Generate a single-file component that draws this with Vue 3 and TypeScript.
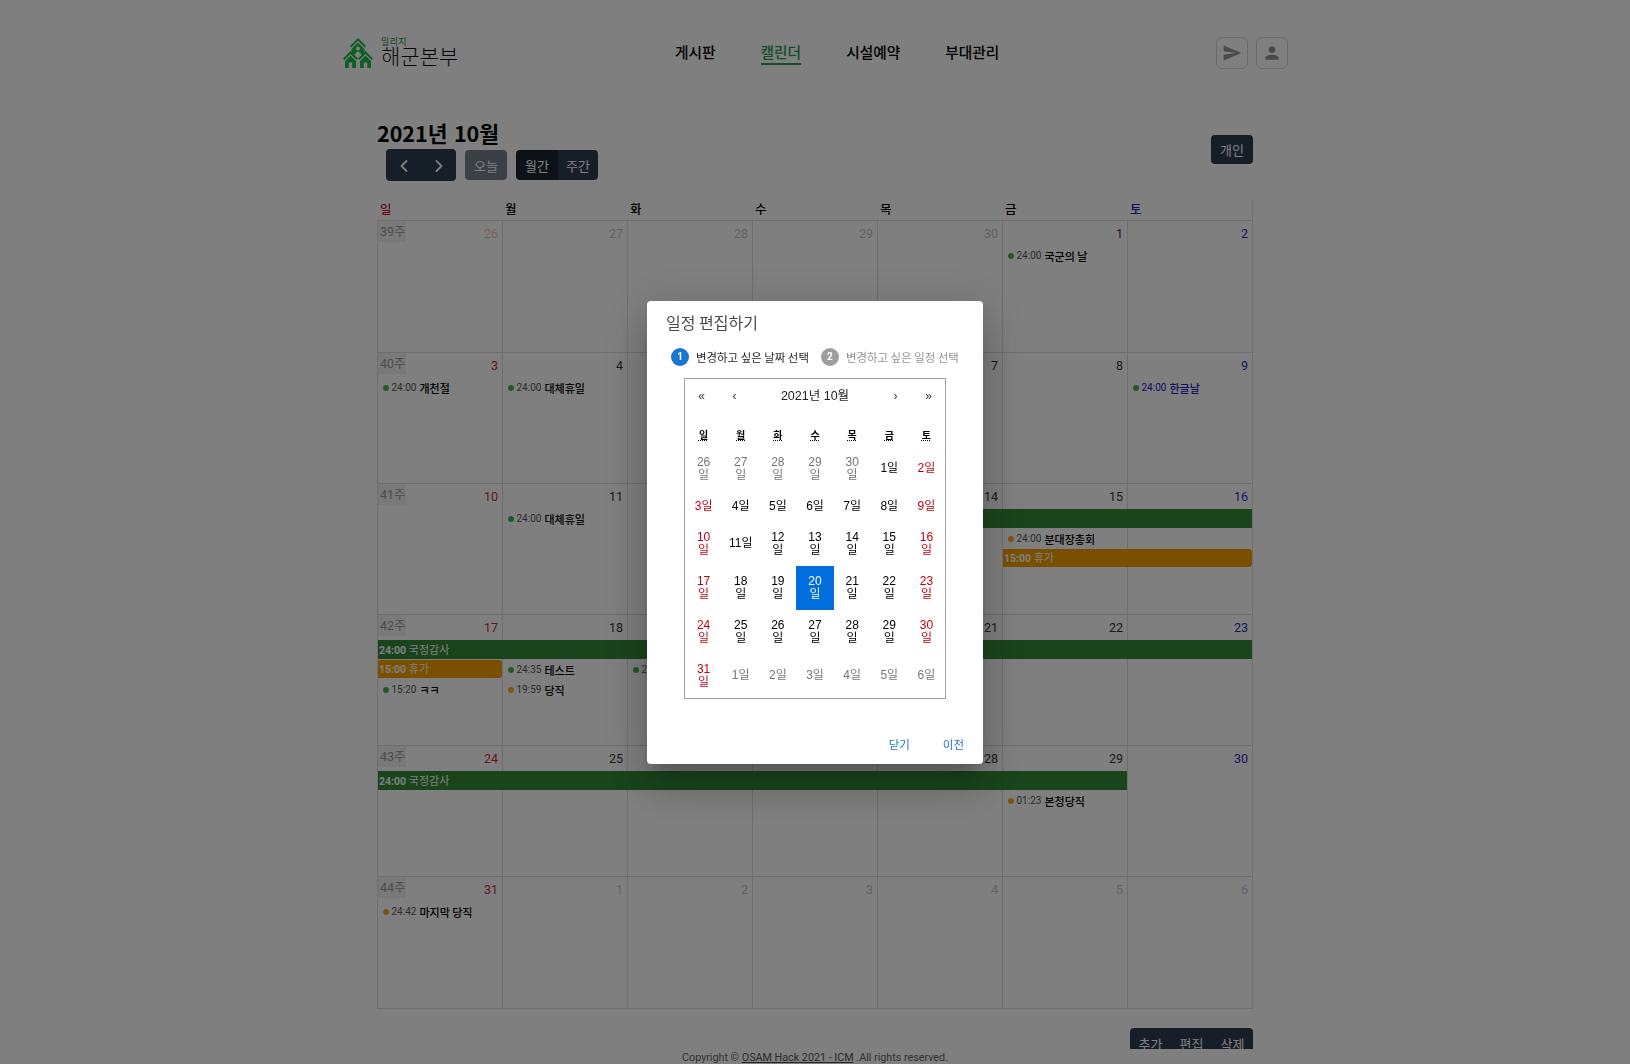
<template>
  <div class="page">
    <header class="topbar">
      <div class="brand">
        <svg class="brand-mark" viewBox="0 0 30 30" width="30" height="30">
          <path d="M15 0 23 8 21.6 9.4 15 2.8 8.4 9.4 7 8z" />
          <path d="M15 4.4 21.5 10.9V17H19L15 13 11 17H8.5V10.9z" />
          <circle cx="15" cy="10.5" r="2" fill="#fff" />
          <path d="M7.5 13 15 20.500 13.6 22 7.500 15.900 1.400 22 0 20.500z" />
          <path d="M22.500 13 30 20.500 28.600 22 22.500 15.900 16.400 22 15 20.500z" />
          <path d="M7.500 17.500 13 23V30H2V23zM22.500 17.500 28 23V30H17V23z" />
          <rect x="5.800" y="24.500" width="3.400" height="5.500" fill="#fff" />
          <rect x="20.800" y="24.500" width="3.400" height="5.500" fill="#fff" />
        </svg>
        <div class="brand-text">
          <span class="brand-sub">밀리지</span>
          <span class="brand-name">해군본부</span>
        </div>
      </div>
      <nav class="menu">
        <a v-for="item in menu" :key="item" class="menu-item" :class="{ active: item === '캘린더' }">{{ item }}</a>
      </nav>
      <div class="top-actions">
        <button class="icon-btn">
          <svg viewBox="0 0 24 24" width="20" height="20"><path d="M2.010 21 23 12 2.010 3 2 10l15 2-15 2z" /></svg>
        </button>
        <button class="icon-btn">
          <svg viewBox="0 0 24 24" width="20" height="20">
            <path d="M12 12c2.210 0 4-1.790 4-4s-1.790-4-4-4-4 1.790-4 4 1.790 4 4 4zm0 2c-2.670 0-8 1.340-8 4v2h16v-2c0-2.660-5.330-4-8-4z" />
          </svg>
        </button>
      </div>
    </header>

    <main class="content">
      <div class="toolbar">
        <div>
          <h1 class="month-title">2021년 10월</h1>
          <div class="controls">
            <div class="btn-group arrows">
              <button class="btn arrow">
                <svg viewBox="0 0 12 16" width="12" height="16"><path d="M8.500 3 3.500 8l5 5" /></svg>
              </button>
              <button class="btn arrow">
                <svg viewBox="0 0 12 16" width="12" height="16"><path d="M3.500 3l5 5-5 5" /></svg>
              </button>
            </div>
            <button class="btn today">오늘</button>
            <div class="btn-group">
              <button class="btn toggled">월간</button>
              <button class="btn">주간</button>
            </div>
          </div>
        </div>
        <button class="btn personal">개인</button>
      </div>

      <div class="dow-row">
        <div v-for="(d, i) in dows" :key="d" class="dow" :class="{ sun: i === 0, sat: i === 6 }">{{ d }}</div>
      </div>

      <div class="weeks">
        <div v-for="week in weeks" :key="week.label" class="week">
          <div
            v-for="(cell, i) in week.cells"
            :key="i"
            class="cell"
            :style="{ gridColumn: i + 1 }"
          >
            <span v-if="i === 0" class="week-no">{{ week.label }}</span>
            <span class="day-no" :class="{ sun: i === 0, sat: i === 6, out: cell.out }">{{ cell.n }}</span>
          </div>
          <template v-for="ev in week.events" :key="ev.title + ev.col + ev.slot">
            <div
              v-if="ev.span"
              class="bar"
              :class="ev.tone"
              :style="{ gridColumn: `${ev.col} / span ${ev.span}`, gridRow: ev.slot + 1 }"
            >
              <b>{{ ev.time }}</b> {{ ev.title }}
            </div>
            <div
              v-else
              class="dot-event"
              :class="{ holiday: ev.holiday }"
              :style="{ gridColumn: ev.col, gridRow: ev.slot + 1 }"
            >
              <i class="dot" :class="ev.tone"></i>
              <span class="dot-time">{{ ev.time }}</span>
              <b>{{ ev.title }}</b>
            </div>
          </template>
        </div>
      </div>

      <div class="bottom-actions">
        <div class="btn-group">
          <button class="btn">추가</button>
          <button class="btn">편집</button>
          <button class="btn">삭제</button>
        </div>
      </div>
    </main>

    <footer class="footer">
      Copyright © <a>OSAM Hack 2021 - ICM</a> .All rights reserved.
    </footer>

    <div class="overlay">
      <div class="dialog">
        <div class="dialog-title">일정 편집하기</div>
        <div class="stepper">
          <span class="step-num on">1</span>
          <span class="step-text on">변경하고 싶은 날짜 선택</span>
          <span class="step-num">2</span>
          <span class="step-text">변경하고 싶은 일정 선택</span>
        </div>
        <div class="picker">
          <div class="picker-nav">
            <button>«</button>
            <button>‹</button>
            <span class="picker-label">2021년 10월</span>
            <button>›</button>
            <button>»</button>
          </div>
          <div class="picker-dows">
            <abbr v-for="d in dows" :key="d" title="">{{ d }}</abbr>
          </div>
          <div class="picker-days">
            <button
              v-for="t in tiles"
              :key="t.key"
              class="tile"
              :class="{ weekend: t.weekend, out: t.out, picked: t.picked }"
            >{{ t.n }}일</button>
          </div>
        </div>
        <div class="dialog-actions">
          <button>닫기</button>
          <button>이전</button>
        </div>
      </div>
    </div>
  </div>
</template>

<script setup lang="ts">
interface CalEvent {
  col: number;
  slot: number;
  span?: number;
  time: string;
  title: string;
  tone: string;
  holiday?: boolean;
}

const menu = ["게시판", "캘린더", "시설예약", "부대관리"];
const dows = ["일", "월", "화", "수", "목", "금", "토"];

// 9월 26일 ~ 11월 6일
const allDays: { n: number; out: boolean }[] = [];
for (let n = 26; n <= 30; n++) allDays.push({ n, out: true });
for (let n = 1; n <= 31; n++) allDays.push({ n, out: false });
for (let n = 1; n <= 6; n++) allDays.push({ n, out: true });

const eventsByWeek: CalEvent[][] = [
  [{ col: 6, slot: 1, time: "24:00", title: "국군의 날", tone: "green" }],
  [
    { col: 1, slot: 1, time: "24:00", title: "개천절", tone: "green" },
    { col: 2, slot: 1, time: "24:00", title: "대체휴일", tone: "green" },
    { col: 7, slot: 1, time: "24:00", title: "한글날", tone: "green", holiday: true },
  ],
  [
    { col: 2, slot: 1, time: "24:00", title: "대체휴일", tone: "green" },
    { col: 4, slot: 1, span: 4, time: "", title: "", tone: "green" },
    { col: 6, slot: 2, time: "24:00", title: "분대장총회", tone: "orange" },
    { col: 6, slot: 3, span: 2, time: "15:00", title: "휴가", tone: "orange" },
  ],
  [
    { col: 1, slot: 1, span: 7, time: "24:00", title: "국정감사", tone: "green" },
    { col: 1, slot: 2, span: 1, time: "15:00", title: "휴가", tone: "orange" },
    { col: 1, slot: 3, time: "15:20", title: "ㅋㅋ", tone: "green" },
    { col: 2, slot: 2, time: "24:35", title: "테스트", tone: "green" },
    { col: 2, slot: 3, time: "19:59", title: "당직", tone: "orange" },
    { col: 3, slot: 2, time: "24:35", title: "테스트", tone: "green" },
  ],
  [
    { col: 1, slot: 1, span: 6, time: "24:00", title: "국정감사", tone: "green" },
    { col: 6, slot: 2, time: "01:23", title: "본청당직", tone: "orange" },
  ],
  [{ col: 1, slot: 1, time: "24:42", title: "마지막 당직", tone: "orange" }],
];

const weeks = eventsByWeek.map((events, i) => ({
  label: `${39 + i}주`,
  cells: allDays.slice(i * 7, i * 7 + 7),
  events,
}));

const tiles = allDays.map((d, i) => ({
  key: i,
  n: d.n,
  out: d.out,
  weekend: i % 7 === 0 || i % 7 === 6,
  picked: !d.out && d.n === 20,
}));
</script>

<style>
html,
body {
  overflow: hidden;
  background: #fff;
}
</style>

<style scoped>
.page {
  height: 100vh;
  overflow: hidden;
  font-family: Roboto, "Noto Sans CJK KR", sans-serif;
  color: #000;
}

button {
  font: inherit;
  border: none;
  background: none;
  padding: 0;
  color: inherit;
}

.topbar {
  width: 946px;
  margin: 0 auto;
  padding-top: 37px;
  height: 32px;
  display: flex;
  justify-content: space-between;
  align-items: center;
}

.brand {
  display: flex;
  align-items: center;
  gap: 8px;
  padding-left: 1px;
}

.brand-mark {
  fill: #1cc044;
}

.brand-text {
  position: relative;
  font-family: "Noto Sans CJK KR", sans-serif;
}

.brand-name {
  display: block;
  font-size: 21px;
  font-weight: 300;
  line-height: 28px;
  margin-top: 4px;
  color: #111;
}

.brand-sub {
  position: absolute;
  left: 0;
  top: -1px;
  font-size: 9px;
  line-height: 12px;
  letter-spacing: 0.4px;
  color: #1f8a3c;
}

.menu {
  display: flex;
  gap: 45px;
  font-family: "Noto Sans CJK KR", sans-serif;
  font-size: 14.700px;
  font-weight: 500;
}

.menu-item {
  padding-bottom: 1px;
  line-height: 20px;
  border-bottom: 2px solid transparent;
}

.menu-item.active {
  color: #249c52;
  border-bottom-color: #249c52;
}

.top-actions {
  display: flex;
  gap: 8px;
}

.icon-btn {
  width: 32px;
  height: 32px;
  border: 1px solid #d4d4d4;
  border-radius: 6px;
  display: flex;
  align-items: center;
  justify-content: center;
  fill: #949494;
}

.content {
  width: 876px;
  margin: 48px auto 0;
}

.toolbar {
  display: flex;
  justify-content: space-between;
  align-items: center;
}

.month-title {
  margin: 0;
  font-family: "Noto Sans CJK KR", sans-serif;
  font-size: 21.500px;
  font-weight: 700;
  line-height: 31px;
  word-spacing: 1.500px;
}

.controls {
  display: flex;
  align-items: center;
  gap: 9px;
  padding-left: 9px;
  margin-top: 1px;
}

.btn-group {
  display: flex;
  border-radius: 4px;
  overflow: hidden;
}

.btn {
  height: 30px;
  padding: 0 8px;
  background: #2c3e50;
  color: #fff;
  font-family: "Noto Sans CJK KR", sans-serif;
  font-size: 13px;
}

.arrows .btn {
  height: 32px;
  width: 35px;
  padding: 1px 0 0;
  display: flex;
  align-items: center;
  justify-content: center;
}

.arrow svg {
  fill: none;
  stroke: #fff;
  stroke-width: 1.800;
  stroke-linecap: round;
  stroke-linejoin: round;
}

.today {
  width: 42px;
  padding: 0;
  border-radius: 4px;
  opacity: 0.65;
}

.toggled {
  width: 42px;
  padding: 0;
  background: #1a252f;
}

.personal {
  width: 42px;
  height: 29px;
  padding: 0;
  border-radius: 4px;
}

.dow-row {
  display: grid;
  grid-template-columns: repeat(7, 1fr);
  height: 20px;
  margin-top: 19px;
  border-right: 1px solid #ddd;
}

.dow {
  padding-left: 3px;
  font-family: "Noto Sans CJK KR", sans-serif;
  font-size: 12.500px;
  font-weight: 500;
  line-height: 18px;
}

.sun {
  color: #c8102e;
}

.sat {
  color: #1a1ab8;
}

.weeks {
  display: grid;
  grid-template-rows: 132px repeat(4, 131px) 132px;
  border-bottom: 1px solid #ddd;
  border-right: 1px solid #ddd;
}

.week {
  display: grid;
  grid-template-columns: repeat(7, 1fr);
  grid-template-rows: 26px 20px 20px 20px 1fr;
  min-height: 0;
}

.cell {
  grid-row: 1 / -1;
  border-top: 1px solid #ddd;
  border-left: 1px solid #ddd;
  position: relative;
  display: flex;
  justify-content: flex-end;
  align-items: flex-start;
}

.week-no {
  position: absolute;
  left: 0;
  top: 0;
  width: 28px;
  height: 21px;
  padding-left: 2px;
  box-sizing: border-box;
  background: #f2f2f2;
  color: #999;
  font-size: 12.500px;
  line-height: 22px;
}

.day-no {
  padding: 5px 4px 0 0;
  font-size: 12.500px;
  line-height: 16px;
  color: #333;
}

.day-no.sun {
  color: #d02838;
}

.day-no.sat {
  color: #2a2ac0;
}

.day-no.out {
  opacity: 0.3;
}

.bar {
  height: 19px;
  margin-left: 1px;
  padding-left: 1px;
  color: #fff;
  font-size: 11px;
  line-height: 22px;
  white-space: nowrap;
  overflow: hidden;
  font-family: Roboto, "Noto Sans CJK KR", sans-serif;
  z-index: 1;
}

.bar b {
  font-size: 10.500px;
}

.bar.green {
  background: #348a38;
}

.bar.orange {
  height: 18px;
  line-height: 20px;
  background: #f5a000;
  border-radius: 0 3px 3px 0;
}

.dot-event {
  height: 19px;
  padding-left: 6px;
  display: flex;
  align-items: center;
  font-size: 10px;
  white-space: nowrap;
  overflow: hidden;
  z-index: 1;
}

.dot {
  width: 6px;
  height: 6px;
  border-radius: 50%;
  margin-right: 2.500px;
  flex: none;
}

.dot.green {
  background: #4caf50;
}

.dot.orange {
  background: #ffa726;
}

.dot-time {
  margin-right: 3px;
  color: #555;
}

.dot-event b {
  font-family: "Noto Sans CJK KR", sans-serif;
  font-size: 11px;
  font-weight: 500;
}

.holiday b,
.holiday .dot-time {
  color: #2020c0;
}

.bottom-actions {
  display: flex;
  justify-content: flex-end;
  margin-top: 19px;
}

.bottom-actions .btn {
  width: 41px;
  padding: 0;
  height: 30px;
}

.footer {
  position: fixed;
  left: 0;
  right: 0;
  bottom: 0;
  height: 15px;
  background: #fff;
  text-align: center;
  font-size: 10.750px;
  line-height: 15px;
  padding-top: 1px;
  box-sizing: border-box;
  color: #666;
}

.footer a {
  color: #555;
  text-decoration: underline;
}

.overlay {
  position: fixed;
  inset: 0;
  z-index: 10;
  background: rgba(0, 0, 0, 0.5);
  display: flex;
  align-items: center;
  justify-content: center;
}

.dialog {
  width: 336px;
  background: #fff;
  border-radius: 4px;
  box-shadow: 0 11px 15px -7px rgba(0, 0, 0, 0.2), 0 24px 38px 3px rgba(0, 0, 0, 0.14),
    0 9px 46px 8px rgba(0, 0, 0, 0.12);
  font-family: "Noto Sans CJK KR", sans-serif;
}

.dialog-title {
  height: 43px;
  padding-left: 19px;
  font-size: 16px;
  line-height: 43px;
  color: rgba(0, 0, 0, 0.72);
}

.stepper {
  height: 26px;
  padding-left: 24px;
  display: flex;
  align-items: center;
  font-size: 11.450px;
  white-space: nowrap;
}

.step-num {
  width: 18px;
  height: 18px;
  border-radius: 50%;
  background: #9e9e9e;
  color: #fff;
  font-family: Roboto, sans-serif;
  font-size: 10px;
  font-weight: 700;
  text-align: center;
  line-height: 18px;
  margin-right: 7px;
}

.step-num.on {
  background: #1976d2;
}

.step-text {
  color: rgba(0, 0, 0, 0.45);
  margin-right: 12px;
}

.step-text.on {
  color: rgba(0, 0, 0, 0.87);
}

.picker {
  width: 262px;
  box-sizing: border-box;
  margin: 8px auto 0;
  border: 1px solid #a0a0a0;
  font-family: "Liberation Sans", "Noto Sans CJK KR", sans-serif;
}

.picker-nav {
  height: 30px;
  display: flex;
  align-items: center;
  margin-bottom: 13px;
  padding-top: 1px;
}

.picker-nav button {
  width: 33px;
  height: 30px;
  font-size: 12px;
  padding-top: 3px;
  color: #333;
}

.picker-label {
  flex: 1;
  text-align: center;
  font-size: 12.500px;
  color: #222;
}

.picker-dows {
  height: 25px;
  display: grid;
  grid-template-columns: repeat(7, 1fr);
  align-items: center;
  text-align: center;
  font-size: 10px;
  font-weight: 700;
  margin-top: -1px;
}

.picker-dows abbr {
  text-decoration: underline dotted;
}

.picker-days {
  display: grid;
  grid-template-columns: repeat(7, 1fr);
}

.tile {
  padding: 9px 6.500px;
  font-size: 12px;
  line-height: 13px;
  color: #000;
  text-align: center;
}

.tile.weekend {
  color: #c00012;
}

.tile.out {
  color: #757575;
}

.tile.picked {
  background: #006edc;
  color: #fff;
}

.dialog-actions {
  height: 24px;
  margin-top: 33px;
  padding: 0 19px 8px 0;
  display: flex;
  justify-content: flex-end;
  gap: 33px;
  font-size: 11.500px;
  line-height: 24px;
  color: #1976d2;
}
</style>
